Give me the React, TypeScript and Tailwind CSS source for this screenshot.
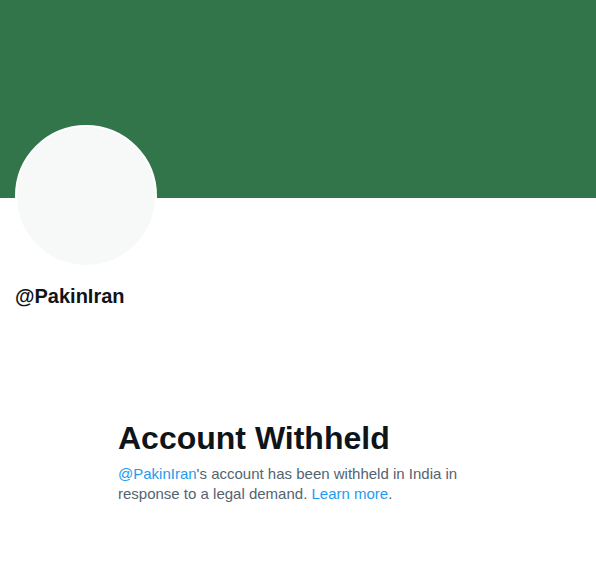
export default function App() {
  return (
    <div className="w-[596px] h-[567px] bg-white overflow-hidden font-['Liberation_Sans',Arial,sans-serif]">
      {/* Banner */}
      <div className="h-[198px] bg-[#32754a]" />

      {/* Avatar */}
      <div className="-mt-[73px] ml-[15px] w-[142px] h-[142px] rounded-full bg-[#f7f9f9] border-[2px] border-white" />

      {/* Handle */}
      <div className="mt-[17px] ml-[15px] text-[20px] font-bold leading-[24px] text-[#0f1419]">
        @PakinIran
      </div>

      {/* Withheld notice */}
      <div className="mt-[112px] ml-[118px] w-[360px]">
        <h1 className="text-[32px] font-bold leading-[36px] text-[#0f1419]">Account Withheld</h1>
        <p className="mt-[8px] text-[15px] leading-[20px] text-[#536471]">
          <span className="text-[#1d9bf0]">@PakinIran</span>'s account has been withheld in India in
          response to a legal demand. <span className="text-[#1d9bf0]">Learn more</span>.
        </p>
      </div>
    </div>
  );
}
